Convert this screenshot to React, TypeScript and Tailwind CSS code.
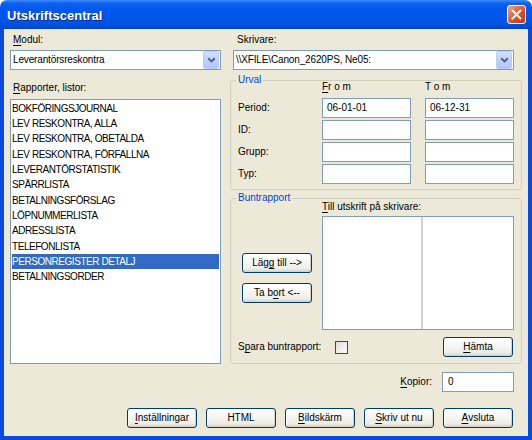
import React from "react";

const items = [
  "BOKFÖRINGSJOURNAL",
  "LEV RESKONTRA, ALLA",
  "LEV RESKONTRA, OBETALDA",
  "LEV RESKONTRA, FÖRFALLNA",
  "LEVERANTÖRSTATISTIK",
  "SPÄRRLISTA",
  "BETALNINGSFÖRSLAG",
  "LÖPNUMMERLISTA",
  "ADRESSLISTA",
  "TELEFONLISTA",
  "PERSONREGISTER DETALJ",
  "BETALNINGSORDER",
];

function U({ children }: { children: React.ReactNode }) {
  return <span className="underline decoration-1 underline-offset-[2px]">{children}</span>;
}

function Btn({ children, className = "" }: { children: React.ReactNode; className?: string }) {
  return (
    <div
      className={`flex h-5 w-[70px] shrink-0 items-center justify-center rounded-[3px] border border-[#003C74] bg-[linear-gradient(to_bottom,#FFFFFF_0%,#F7F7F4_40%,#EEEDE7_80%,#D9D4C9_100%)] text-[10px] leading-none text-black shadow-[inset_1px_1px_0_#FFFFFF,inset_-1px_-1px_0_#D6D0C5] ${className}`}
    >
      {children}
    </div>
  );
}

function Combo({ text, className = "" }: { text: string; className?: string }) {
  return (
    <div className={`flex h-5 min-w-0 items-center border border-[#7F9DB9] bg-white ${className}`}>
      <div className="min-w-0 flex-1 truncate pl-[2px] text-[10px] leading-[12px] tracking-[-0.15px]">{text}</div>
      <div className="mr-[1px] flex h-[18px] w-[16px] items-center justify-center rounded-[2px] border border-[#BACCF5] bg-[linear-gradient(to_bottom,#D4E0FD,#C0D1FB_50%,#B2C7F8)]">
        <svg width="9" height="6" viewBox="0 0 9 6">
          <polyline points="1.2,1.2 4.5,4.4 7.8,1.2" fill="none" stroke="#4D6185" strokeWidth="1.9" />
        </svg>
      </div>
    </div>
  );
}

function Input({ text = "", className = "" }: { text?: string; className?: string }) {
  return (
    <div className={`flex h-5 items-center border border-[#7F9DB9] bg-white pl-[4px] text-[10px] leading-[12px] ${className}`}>
      {text}
    </div>
  );
}

function Group({ title, className = "", children }: { title: string; className?: string; children: React.ReactNode }) {
  return (
    <div className={`relative rounded-[4px] border border-[#D0D0BF] ${className}`}>
      <span className="absolute -top-[7px] left-[5px] bg-[#ECE9D8] px-[2px] text-[10px] leading-[12px] text-[#0046D5]">
        {title}
      </span>
      {children}
    </div>
  );
}

export default function App() {
  return (
    <div className="h-[440px] w-[532px] bg-white font-['Liberation_Sans',Arial,sans-serif] text-black">
      <div className="flex h-full w-full flex-col overflow-hidden rounded-t-[7px]">
        {/* Title bar */}
        <div className="flex h-[29px] shrink-0 items-center justify-between bg-[linear-gradient(to_bottom,#3E8EFA_0%,#1E6FF5_7%,#0C5FEF_14%,#0058EE_30%,#0055E8_70%,#0050DE_88%,#0043C8_100%)] pl-[7px] pr-[6px]">
          <span className="pt-[1px] text-[13px] font-bold leading-none text-white [text-shadow:1px_1px_0_#0C2A8E]">
            Utskriftscentral
          </span>
          <div className="flex h-[19px] w-[19px] items-center justify-center rounded-[3px] border border-white bg-[linear-gradient(135deg,#F0A78C_0%,#E2683F_40%,#D3461C_70%,#C43A14_100%)]">
            <svg width="11" height="11" viewBox="0 0 11 11">
              <path d="M1.5 1.5 L9.5 9.5 M9.5 1.5 L1.5 9.5" stroke="#FFFFFF" strokeWidth="2" strokeLinecap="round" />
            </svg>
          </div>
        </div>

        {/* Body */}
        <div className="flex flex-1 flex-col border-x-4 border-b-4 border-[#0A49DE] bg-[#ECE9D8] pl-[6px] pr-[6px] pt-[5px]">
          <div className="grid grid-cols-[211px_292px] items-start gap-x-[9px]">
            {/* Left column */}
            <div className="flex flex-col">
              <div className="pl-[3px] text-[10px] leading-[12px]">
                <U>M</U>odul:
              </div>
              <Combo text="Leverantörsreskontra" className="mt-[4px]" />
              <div className="mt-[12px] pl-[3px] text-[10px] leading-[12px]">
                <U>R</U>apporter, listor:
              </div>
              <div className="mt-[5px] h-[265px] border border-[#7F9DB9] bg-white pt-[0.5px]">
                {items.map((it, i) => (
                  <div
                    key={it}
                    className={`mx-[1px] h-[15.36px] whitespace-nowrap text-[10px] leading-[15.36px] tracking-[-0.45px] ${
                      i === 10 ? "bg-[#316AC5] text-white" : ""
                    }`}
                  >
                    {it}
                  </div>
                ))}
              </div>
            </div>

            {/* Right column */}
            <div className="flex min-w-0 flex-col">
              <div className="pl-[7px] text-[10px] leading-[12px]">Skrivare:</div>
              <Combo text={"\\\\XFILE\\Canon_2620PS, Ne05:"} className="ml-[3px] mr-[8px] mt-[4px]" />

              <Group title="Urval" className="mt-[10px] h-[110px] pl-[7px] pr-[7px]">
                <div className="grid grid-cols-[70px_89px_89px] gap-x-[14px] text-[10px] leading-[12px]">
                  <div />
                  <div>
                    <U>F</U>r o m
                  </div>
                  <div>T o m</div>
                </div>
                <div className="mt-[5px] grid grid-cols-[70px_89px_89px] gap-x-[14px] gap-y-[2px] text-[10px] leading-[12px]">
                  <div className="flex items-center">Period:</div>
                  <Input text="06-01-01" />
                  <Input text="06-12-31" />
                  <div className="flex items-center">ID:</div>
                  <Input />
                  <Input />
                  <div className="flex items-center">Grupp:</div>
                  <Input />
                  <Input />
                  <div className="flex items-center">Typ:</div>
                  <Input />
                  <Input />
                </div>
              </Group>

              <Group title="Buntrapport" className="mt-[8px] h-[166px] pl-[7px] pr-[7px] pt-[2px]">
                <div className="grid grid-cols-[84px_192px] text-[10px] leading-[12px]">
                  <div />
                  <div>
                    <U>T</U>ill utskrift på skrivare:
                  </div>
                </div>
                <div className="mt-[3px] grid grid-cols-[84px_192px]">
                  <div className="flex flex-col pl-[4px] pt-[37px]">
                    <Btn>
                      Läg<U>g</U>&nbsp;till --&gt;
                    </Btn>
                    <Btn className="mt-[10px]">
                      Ta b<U>o</U>rt &lt;--
                    </Btn>
                  </div>
                  <div className="flex h-[114px] border border-[#7F9DB9] bg-white">
                    <div className="w-[100px] border-r-2 border-[#D5D2CB]" />
                    <div className="flex-1" />
                  </div>
                </div>
                <div className="mt-[7px] flex h-5 items-center pr-[1px] text-[10px] leading-[12px]">
                  <div className="w-[97px] whitespace-nowrap">
                    S<U>p</U>ara buntrapport:
                  </div>
                  <div className="h-[13px] w-[13px] border border-[#1C5180] bg-[linear-gradient(135deg,#DCDCD7,#FFFFFF)]" />
                  <Btn className="ml-auto">
                    <U>H</U>ämta
                  </Btn>
                </div>
              </Group>

              <div className="mt-[8px] flex items-center justify-end gap-[10px] pr-[8px] text-[10px] leading-[12px]">
                <div>
                  <U>K</U>opior:
                </div>
                <Input text="0" className="w-[72px] pl-[5px]" />
              </div>
            </div>
          </div>

          <div className="mt-[16px] flex justify-end gap-[9px] pr-[9px]">
            <Btn>
              <U>I</U>nställningar
            </Btn>
            <Btn>HTML</Btn>
            <Btn>
              <U>B</U>ildskärm
            </Btn>
            <Btn>
              <U>S</U>kriv ut nu
            </Btn>
            <Btn>
              <U>A</U>vsluta
            </Btn>
          </div>
        </div>
      </div>
    </div>
  );
}
